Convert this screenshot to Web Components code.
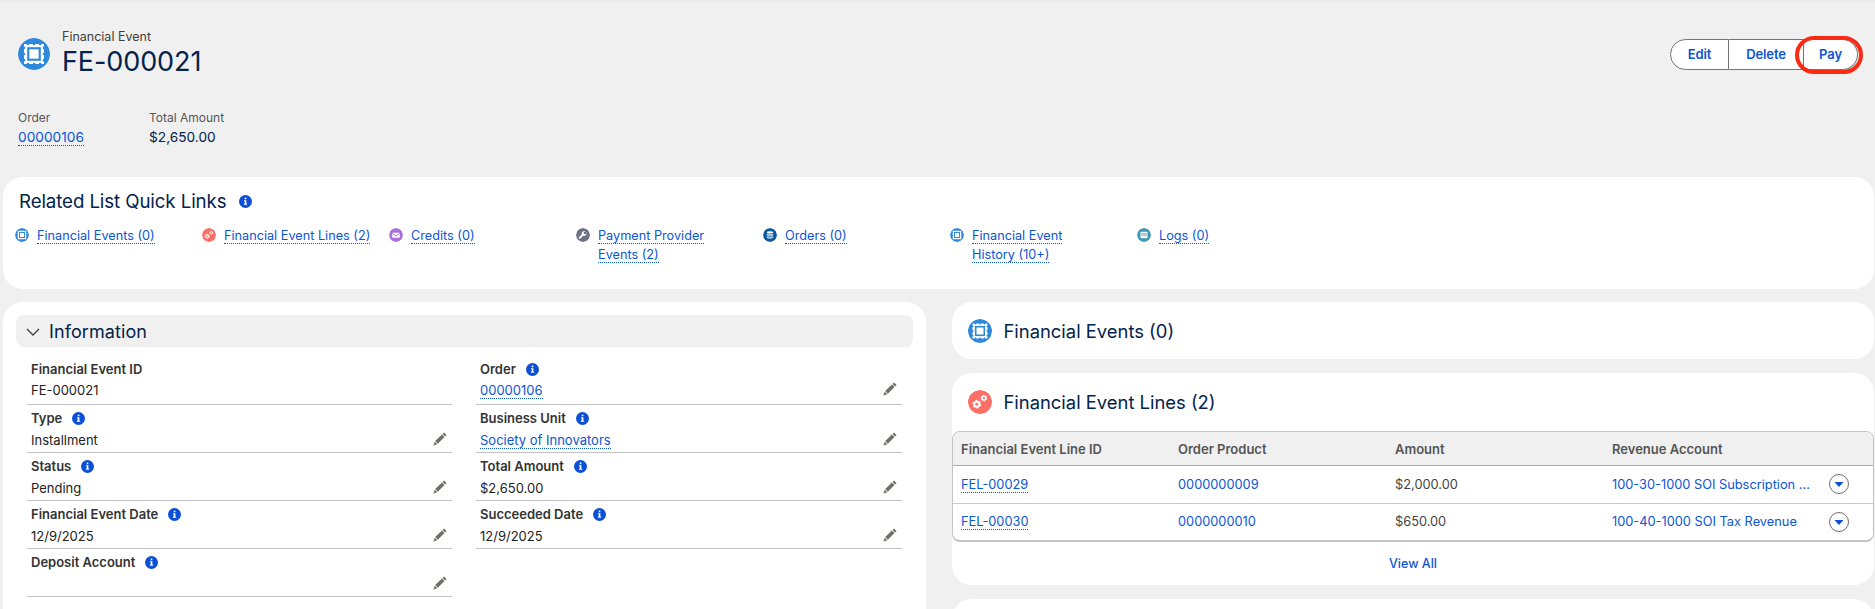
<!DOCTYPE html>
<html lang="en"><head><meta charset="utf-8"><title>FE-000021</title>
<style>
html,body{margin:0;padding:0;background:#f0f0f0;}
body{font-family:Inter,"Liberation Sans",sans-serif;width:1875px;height:609px;overflow:hidden;}
</style></head><body>
<fe-app>
  <fe-header slot="header" record-type="Financial Event" title-text="FE-000021"></fe-header>
  <fe-quick-links slot="links"></fe-quick-links>
  <fe-info-card slot="left"></fe-info-card>
  <fe-list-card slot="right" icon="chip" heading="Financial Events (0)"></fe-list-card>
  <fe-list-card slot="right" icon="gears" heading="Financial Event Lines (2)"><fe-lines-table></fe-lines-table></fe-list-card>
  <fe-list-card slot="right" stub></fe-list-card>
</fe-app>
<script>
const LINK='#0b55d6',NAVY='#03234d';
const perim=(()=>{let s='';[7.4,12,16.6].forEach(p=>{s+=`<circle cx="${p}" cy="4.500" r=".95"/><circle cx="${p}" cy="19.500" r=".95"/><circle cx="4.500" cy="${p}" r=".95"/><circle cx="19.500" cy="${p}" r=".95"/>`});return s})();
const gear=(cx,cy,r)=>`<circle cx="${cx}" cy="${cy}" r="${r*.62}" fill="none" stroke="#fff" stroke-width="${r*.5}"/><circle cx="${cx}" cy="${cy}" r="${r*.94}" fill="none" stroke="#fff" stroke-width="${r*.32}" stroke-dasharray="${(r*.94*2*Math.PI/12).toFixed(2)}"/>`;
const ICONS={
 chip:{bg:'#2e88dc',svg:`<rect x="4.500" y="4.500" width="15" height="15" fill="#fff"/><g fill="#2e88dc">${perim}</g><rect x="6.900" y="6.900" width="10.200" height="10.200" fill="#2e88dc"/><rect x="8.500" y="8.500" width="7" height="7" fill="#fff"/>`},
 gears:{bg:'#fb6f66',svg:gear(8.800,14.200,4)+gear(15.900,8.100,3.100)},
 mail:{bg:'#a871dc',svg:`<path fill="#fff" d="M6 8h12c.4 0 .6.200.4.500L12 12.800 5.600 8.500C5.400 8.200 5.600 8 6 8zM5.500 10l6.500 4.400 6.500-4.400v5.800c0 .5-.4.800-.8.800H6.300c-.4 0-.8-.3-.8-.8z"/>`},
 wrench:{bg:'#6b7186',svg:`<path fill="#fff" d="M18.700 8.300l-2.600 2.500-2.400-.5-.5-2.400 2.600-2.500c-1.800-.6-3.800-.1-5 1.300-1.100 1.200-1.400 2.800-.9 4.300l-4.800 4.800a1.700 1.700 0 0 0 2.400 2.400l4.800-4.800c1.500.5 3.200.2 4.400-1 1.400-1.300 1.800-3.100 1-4.900z"/>`},
 orders:{bg:'#0b5a9e',svg:`<g fill="#fff"><ellipse cx="12" cy="7.500" rx="5.500" ry="2"/><path opacity=".85" d="M6.500 9.300c1 1 3 1.500 5.500 1.500s4.500-.5 5.500-1.500v2.500c-1 1-3 1.500-5.500 1.500s-4.500-.5-5.500-1.500z"/><path opacity=".7" d="M6.500 13.300c1 1 3 1.500 5.500 1.500s4.500-.5 5.500-1.500v3c0 1-2.500 2-5.500 2s-5.500-1-5.500-2z"/></g>`},
 logs:{bg:'#3b97b4',svg:`<path fill="#fff" d="M7 6.500h10c.6 0 1 .4 1 1v9c0 .6-.4 1-1 1H7c-.6 0-1-.4-1-1v-9c0-.6.4-1 1-1z"/><path fill="#3b97b4" d="M8 8.500h8v5H8z"/><path fill="#cfe8f0" d="M8.800 9.300h6.400v3.400H8.800z"/>`}
};
function def(name,css,html){
  customElements.define(name,class extends HTMLElement{
    constructor(){super();this.attachShadow({mode:'open'});}
    connectedCallback(){
      const h=typeof html==='function'?html(this):html;
      this.shadowRoot.innerHTML=`<style>${css}</style>${h}`;
    }
  });
}
def('fe-icon',`:host{display:inline-flex;flex:none}svg{display:block;border-radius:50%}`,
 el=>{const i=ICONS[el.getAttribute('name')],s=el.getAttribute('size')||24;
  return `<svg width="${s}" height="${s}" viewBox="0 0 24 24"><circle cx="12" cy="12" r="12" fill="${i.bg}"/>${i.svg}</svg>`;});
def('fe-info-dot',`:host{display:inline-flex;flex:none}svg{display:block}`,
 `<svg width="13" height="13" viewBox="0 0 13 13"><circle cx="6.500" cy="6.500" r="6.500" fill="#0b4fd6"/><rect x="5.700" y="2.600" width="1.700" height="1.700" rx=".5" fill="#fff"/><path fill="#fff" d="M4.900 5.300h2.500v3.500h.8v1H4.900v-1h.8V6.300h-.8z"/></svg>`);
def('fe-pencil',`:host{display:inline-flex;flex:none}svg{display:block}`,
 `<svg width="14" height="14" viewBox="0 0 14 14" fill="#706e6b"><path d="M11 .4l2.600 2.500-1.500 1.500L9.500 1.900z"/><path d="M8.900 2.500l2.600 2.600-6.700 6.600-2.600-2.600z"/><path d="M1.700 9.700l2.600 2.600-3.700 1.200a.2.2 0 0 1-.2-.2z"/></svg>`);
def('fe-link',`:host{display:inline;color:${LINK}}span{border-bottom:1px dotted ${LINK}}`,`<span><slot></slot></span>`);

def('fe-button-group',`
 :host{display:flex;position:relative;height:31px;font:600 13px/29px Inter,"Liberation Sans",sans-serif;color:${LINK};letter-spacing:-.1px}
 .b{background:#fff;border:1px solid #747474;border-left:0;text-align:center;box-sizing:border-box}
 .e{border-left:1px solid #747474;border-radius:16px 0 0 16px;width:59px}
 .m{width:75px}.l{border-radius:0 16px 16px 0;width:54px}
 .mark{position:absolute;left:125px;top:-3px;width:68px;height:38px;box-sizing:border-box;border:4.500px solid #fb2a12;border-radius:19px}`,
 `<div class="b e">Edit</div><div class="b m">Delete</div><div class="b l">Pay</div><div class="mark"></div>`);

def('fe-header',`
 :host{display:block;height:177px;box-sizing:border-box;padding:27px 17px 0 18px;border-top:2px solid #ececec}
 .top{display:flex;justify-content:space-between}
 .id{display:flex;gap:12px}
 fe-icon{margin-top:9px}
 .sub{font-size:12.500px;line-height:16px;color:#3e3e3c}
 h1{margin:0;font-size:27px;font-weight:400;line-height:34px;color:${NAVY};letter-spacing:-.1px}
 fe-button-group{margin-top:10px}
 .meta{display:flex;margin-top:30px}
 .f{width:131px}
 .l{font-size:12px;line-height:18px;color:#555;}
 .v{font-size:13.700px;line-height:21px;color:${NAVY};}`,
 el=>`<div class="top"><div class="id"><fe-icon name="chip" size="32"></fe-icon><div><div class="sub">${el.getAttribute('record-type')}</div><h1>${el.getAttribute('title-text')}</h1></div></div><fe-button-group></fe-button-group></div>
 <div class="meta"><div class="f"><div class="l">Order</div><div class="v"><fe-link>00000106</fe-link></div></div><div class="f"><div class="l">Total Amount</div><div class="v">$2,650.00</div></div></div>`);

const QL=[['chip','Financial Events (0)'],['gears','Financial Event Lines (2)'],['mail','Credits (0)'],['wrench','Payment Provider<br>Events (2)'],['orders','Orders (0)'],['chip','Financial Event<br>History (10+)'],['logs','Logs (0)']];
def('fe-quick-links',`
 :host{display:block;background:#fff;border-radius:20px;height:112px;box-sizing:border-box;padding:13px 12px 0 12px;margin:0 1px 13px 3px}
 h2{margin:0 0 0 4px;font-size:18.700px;font-weight:400;line-height:24px;color:${NAVY};display:flex;align-items:center;gap:13px;letter-spacing:-.1px}
 h2 fe-info-dot{margin-top:-2px}
 .g{display:grid;grid-template-columns:repeat(7,187px);margin-top:11.500px;font-size:12.700px;line-height:19px}
 .i{display:flex;gap:8px}
 fe-icon{margin-top:2px}`,
 `<h2>Related List Quick Links <fe-info-dot></fe-info-dot></h2><div class="g">${QL.map(([i,t])=>`<div class="i"><fe-icon name="${i}" size="14"></fe-icon><div>${t.split('<br>').map(x=>`<fe-link>${x}</fe-link>`).join('<br>')}</div></div>`).join('')}</div>`);

def('fe-field',`
 :host{display:block;height:48px;box-sizing:border-box;border-bottom:1.500px solid #c4c4c4;padding:3px 5px 0 4px;font-size:13px}
 :host([first]){padding-top:2px}
 .l{display:flex;align-items:center;gap:10px;font-weight:600;line-height:20px;color:#333;height:20px}
 .v{display:flex;justify-content:space-between;align-items:center;line-height:20px;height:20px;margin-top:2px;color:#222}
 :host([first]) .v{margin-top:1px}
 fe-pencil{margin-top:-3px}`,
 el=>`<div class="l">${el.getAttribute('label')}${el.hasAttribute('info')?'<fe-info-dot></fe-info-dot>':''}</div><div class="v"><span><slot></slot></span>${el.hasAttribute('edit')?'<fe-pencil></fe-pencil>':''}</div>`);

def('fe-info-card',`
 :host{display:block;background:#fff;border-radius:20px 20px 0 0;height:307px;box-sizing:border-box;padding:13px 13px 0}
 .h{background:#f0f0f0;border-radius:8px;height:32px;display:flex;align-items:center;gap:9px;padding-left:10px;font-size:18px;color:${NAVY};letter-spacing:.1px}
 .h svg{display:block;margin-top:2px}
 .c{display:grid;grid-template-columns:425px 426px;gap:0 24px;margin:10px 0 0 11px;align-items:start}`,
 `<div class="h"><svg width="14" height="8" viewBox="0 0 14 8" fill="none" stroke="#3e3e3c" stroke-width="1.300"><path d="M1 1l6 6 6-6"/></svg><span>Information</span></div>
 <div class="c"><div>
 <fe-field first label="Financial Event ID">FE-000021</fe-field>
 <fe-field label="Type" info edit>Installment</fe-field>
 <fe-field label="Status" info edit>Pending</fe-field>
 <fe-field label="Financial Event Date" info edit>12/9/2025</fe-field>
 <fe-field label="Deposit Account" info edit></fe-field>
 </div><div>
 <fe-field first label="Order" info edit><fe-link>00000106</fe-link></fe-field>
 <fe-field label="Business Unit" info edit><fe-link>Society of Innovators</fe-link></fe-field>
 <fe-field label="Total Amount" info edit>$2,650.00</fe-field>
 <fe-field label="Succeeded Date" info edit>12/9/2025</fe-field>
 </div></div>`);

def('fe-list-card',`
 :host{display:block;background:#fff;border-radius:20px;overflow:hidden}
 :host([stub]){height:40px;border-radius:20px 20px 0 0}
 .t{display:flex;align-items:center;gap:11.500px;height:57px;padding-left:16px;font-size:18.400px;color:${NAVY}}`,
 el=>el.hasAttribute('stub')?'':`<div class="t"><fe-icon name="${el.getAttribute('icon')}" size="24"></fe-icon><span>${el.getAttribute('heading')}</span></div><slot></slot>`);

def('fe-row-menu',`:host{display:flex;flex:none}svg{display:block}`,
 `<svg width="20" height="20" viewBox="0 0 20 20"><circle cx="10" cy="10" r="9.500" fill="#fff" stroke="#706e6b"/><path d="M5.500 8h9L10 13z" fill="#0b4fd6"/></svg>`);
const ROWS=[['FEL-00029','0000000009','$2,000.00','100-30-1000 SOI Subscription ...'],['FEL-00030','0000000010','$650.00','100-40-1000 SOI Tax Revenue']];
def('fe-lines-table',`
 :host{display:block;font-size:12.800px;margin-top:1px}
 .tb{border:1px solid #c4c4c4;border-radius:8px;border-bottom:2px solid #c4c4c4;overflow:hidden}
 .r{display:grid;grid-template-columns:217px 217px 217px 217px 1fr;padding-left:8px;align-items:center}
 .hd{height:33px;background:#f0f0f0;font-weight:600;color:#555;border-bottom:1.500px solid #aaa;font-size:13px}
 .row{height:36.500px;color:#444}
 .row+.row{border-top:1px solid #c9c9c9}
 .a{color:${LINK}}
 .m{display:flex;justify-content:flex-start}
 .va{text-align:center;height:43px;line-height:43px;font-size:12.500px;color:${LINK};font-weight:500}`,
 `<div class="tb"><div class="r hd"><div>Financial Event Line ID</div><div>Order Product</div><div>Amount</div><div>Revenue Account</div><div></div></div>
 ${ROWS.map(r=>`<div class="r row"><div><fe-link>${r[0]}</fe-link></div><div class="a">${r[1]}</div><div>${r[2]}</div><div class="a">${r[3]}</div><div class="m"><fe-row-menu></fe-row-menu></div></div>`).join('')}</div>
 <div class="va">View All</div>`);

def('fe-app',`
 :host{display:block;width:1875px;height:609px;overflow:hidden}
 .cols{display:grid;grid-template-columns:923px 922px;gap:26px;margin:0 1px 0 3px;align-items:start}
 .right{display:flex;flex-direction:column;gap:14px}`,
 `<slot name="header"></slot><slot name="links"></slot><div class="cols"><div><slot name="left"></slot></div><div class="right"><slot name="right"></slot></div></div>`);
</script>
</body></html>
